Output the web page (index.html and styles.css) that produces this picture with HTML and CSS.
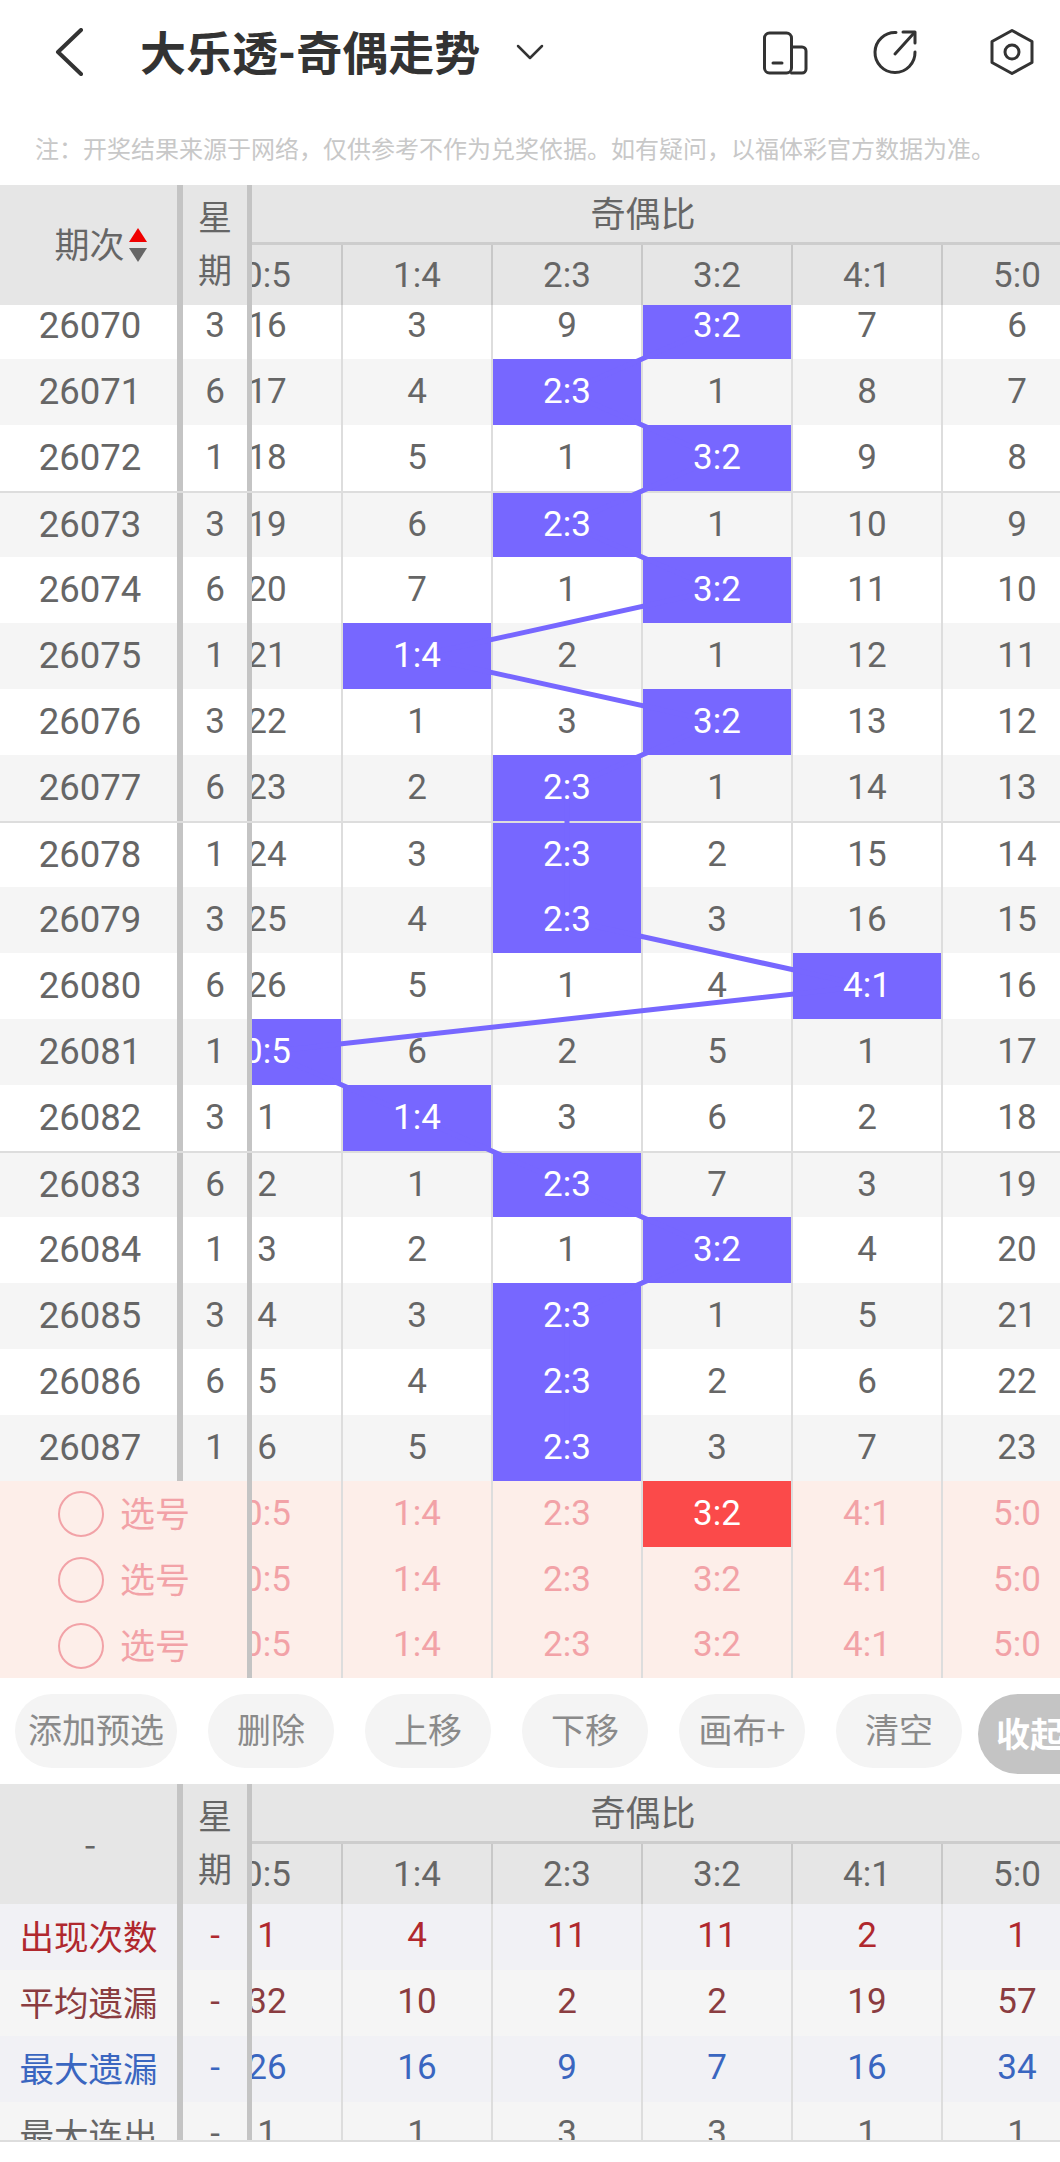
FILE: index.html

```html
<!DOCTYPE html>
<html lang="zh-CN">
<head>
    <meta charset="UTF-8">
    <title>大乐透-奇偶走势</title>
    <link rel="stylesheet" href="styles.css">
</head>
<body>
    <div class="topbar">
        <svg class="back" width="30" height="48" viewBox="0 0 30 48"><path d="M27 2 L4 24 L27 46"/></svg>
        <div class="title">大乐透-奇偶走势</div>
        <svg class="drop" width="30" height="16" viewBox="0 0 30 16"><path d="M3 2 L15 14 L27 2"/></svg>
        <div class="top-icons">
            <svg width="48" height="48" viewBox="0 0 48 48"><rect x="3.5" y="5" width="27" height="40" rx="5"/><path d="M30.5 19 H41 a4 4 0 0 1 4 4 V41 a4 4 0 0 1 -4 4 H30.5"/><path d="M12 35 H21"/></svg>
            <svg width="48" height="48" viewBox="0 0 48 48"><path d="M25 4.5 A20 20 0 1 0 44 24"/><path d="M24 26 L43 5"/><path d="M32 4 H44 V15"/></svg>
            <svg width="48" height="48" viewBox="0 0 48 48"><path d="M24 2.5 L44 13.5 V34.5 L24 45.5 L4 34.5 V13.5 Z"/><circle cx="24" cy="24" r="7"/></svg>
        </div>
    </div>
    <div class="note">注：开奖结果来源于网络，仅供参考不作为兑奖依据。如有疑问，以福体彩官方数据为准。</div>

    <div class="thead">
        <div class="qi sorted">期次<span class="sort"><i class="up"></i><i class="down"></i></span></div>
        <div class="xq"><span>星</span><span>期</span></div>
        <div class="pane">
            <div class="group">奇偶比</div>
            <div class="cells"><div>0:5</div><div>1:4</div><div>2:3</div><div>3:2</div><div>4:1</div><div>5:0</div></div>
        </div>
    </div>

    <div class="board">
        <svg class="lines" width="808" height="1176" viewBox="252 305 808 1176">
            <polyline points="717,326 567,392 717,458 567,524 717,590 417,656 717,722 567,788 567,854 567,920 867,986 267,1052 417,1118 567,1184 717,1250 567,1316 567,1382 567,1448"/>
        </svg>
        <div class="board-in">
            <div class="row"><div class="qi">26070</div><div class="xq">3</div><div class="pane"><div class="cells"><div>16</div><div>3</div><div>9</div><div class="hit"><span>3:2</span></div><div>7</div><div>6</div></div></div></div>
            <div class="row alt"><div class="qi">26071</div><div class="xq">6</div><div class="pane"><div class="cells"><div>17</div><div>4</div><div class="hit"><span>2:3</span></div><div>1</div><div>8</div><div>7</div></div></div></div>
            <div class="row"><div class="qi">26072</div><div class="xq">1</div><div class="pane"><div class="cells"><div>18</div><div>5</div><div>1</div><div class="hit"><span>3:2</span></div><div>9</div><div>8</div></div></div></div>
            <div class="row alt five"><div class="qi">26073</div><div class="xq">3</div><div class="pane"><div class="cells"><div>19</div><div>6</div><div class="hit"><span>2:3</span></div><div>1</div><div>10</div><div>9</div></div></div></div>
            <div class="row"><div class="qi">26074</div><div class="xq">6</div><div class="pane"><div class="cells"><div>20</div><div>7</div><div>1</div><div class="hit"><span>3:2</span></div><div>11</div><div>10</div></div></div></div>
            <div class="row alt"><div class="qi">26075</div><div class="xq">1</div><div class="pane"><div class="cells"><div>21</div><div class="hit"><span>1:4</span></div><div>2</div><div>1</div><div>12</div><div>11</div></div></div></div>
            <div class="row"><div class="qi">26076</div><div class="xq">3</div><div class="pane"><div class="cells"><div>22</div><div>1</div><div>3</div><div class="hit"><span>3:2</span></div><div>13</div><div>12</div></div></div></div>
            <div class="row alt"><div class="qi">26077</div><div class="xq">6</div><div class="pane"><div class="cells"><div>23</div><div>2</div><div class="hit"><span>2:3</span></div><div>1</div><div>14</div><div>13</div></div></div></div>
            <div class="row five"><div class="qi">26078</div><div class="xq">1</div><div class="pane"><div class="cells"><div>24</div><div>3</div><div class="hit"><span>2:3</span></div><div>2</div><div>15</div><div>14</div></div></div></div>
            <div class="row alt"><div class="qi">26079</div><div class="xq">3</div><div class="pane"><div class="cells"><div>25</div><div>4</div><div class="hit"><span>2:3</span></div><div>3</div><div>16</div><div>15</div></div></div></div>
            <div class="row"><div class="qi">26080</div><div class="xq">6</div><div class="pane"><div class="cells"><div>26</div><div>5</div><div>1</div><div>4</div><div class="hit"><span>4:1</span></div><div>16</div></div></div></div>
            <div class="row alt"><div class="qi">26081</div><div class="xq">1</div><div class="pane"><div class="cells"><div class="hit"><span>0:5</span></div><div>6</div><div>2</div><div>5</div><div>1</div><div>17</div></div></div></div>
            <div class="row"><div class="qi">26082</div><div class="xq">3</div><div class="pane"><div class="cells"><div>1</div><div class="hit"><span>1:4</span></div><div>3</div><div>6</div><div>2</div><div>18</div></div></div></div>
            <div class="row alt five"><div class="qi">26083</div><div class="xq">6</div><div class="pane"><div class="cells"><div>2</div><div>1</div><div class="hit"><span>2:3</span></div><div>7</div><div>3</div><div>19</div></div></div></div>
            <div class="row"><div class="qi">26084</div><div class="xq">1</div><div class="pane"><div class="cells"><div>3</div><div>2</div><div>1</div><div class="hit"><span>3:2</span></div><div>4</div><div>20</div></div></div></div>
            <div class="row alt"><div class="qi">26085</div><div class="xq">3</div><div class="pane"><div class="cells"><div>4</div><div>3</div><div class="hit"><span>2:3</span></div><div>1</div><div>5</div><div>21</div></div></div></div>
            <div class="row"><div class="qi">26086</div><div class="xq">6</div><div class="pane"><div class="cells"><div>5</div><div>4</div><div class="hit"><span>2:3</span></div><div>2</div><div>6</div><div>22</div></div></div></div>
            <div class="row alt"><div class="qi">26087</div><div class="xq">1</div><div class="pane"><div class="cells"><div>6</div><div>5</div><div class="hit"><span>2:3</span></div><div>3</div><div>7</div><div>23</div></div></div></div>
        </div>
    </div>

    <div class="picks">
        <div class="row"><div class="pick"><span class="ring"></span>选号</div><div class="pane"><div class="cells"><div>0:5</div><div>1:4</div><div>2:3</div><div class="sel">3:2</div><div>4:1</div><div>5:0</div></div></div></div>
        <div class="row"><div class="pick"><span class="ring"></span>选号</div><div class="pane"><div class="cells"><div>0:5</div><div>1:4</div><div>2:3</div><div>3:2</div><div>4:1</div><div>5:0</div></div></div></div>
        <div class="row"><div class="pick"><span class="ring"></span>选号</div><div class="pane"><div class="cells"><div>0:5</div><div>1:4</div><div>2:3</div><div>3:2</div><div>4:1</div><div>5:0</div></div></div></div>
    </div>

    <div class="toolbar">
        <div class="pill wide">添加预选</div>
        <div class="pill">删除</div>
        <div class="pill">上移</div>
        <div class="pill">下移</div>
        <div class="pill">画布+</div>
        <div class="pill">清空</div>
        <div class="pill fold">收起</div>
    </div>

    <div class="thead">
        <div class="qi">-</div>
        <div class="xq"><span>星</span><span>期</span></div>
        <div class="pane">
            <div class="group">奇偶比</div>
            <div class="cells"><div>0:5</div><div>1:4</div><div>2:3</div><div>3:2</div><div>4:1</div><div>5:0</div></div>
        </div>
    </div>
    <div class="stats">
        <div class="row s-red"><div class="qi">出现次数</div><div class="xq">-</div><div class="pane"><div class="cells"><div>1</div><div>4</div><div>11</div><div>11</div><div>2</div><div>1</div></div></div></div>
        <div class="row s-brown"><div class="qi">平均遗漏</div><div class="xq">-</div><div class="pane"><div class="cells"><div>32</div><div>10</div><div>2</div><div>2</div><div>19</div><div>57</div></div></div></div>
        <div class="row s-blue"><div class="qi">最大遗漏</div><div class="xq">-</div><div class="pane"><div class="cells"><div>26</div><div>16</div><div>9</div><div>7</div><div>16</div><div>34</div></div></div></div>
        <div class="row s-gray"><div class="qi">最大连出</div><div class="xq">-</div><div class="pane"><div class="cells"><div>1</div><div>1</div><div>3</div><div>3</div><div>1</div><div>1</div></div></div></div>
    </div>
</body>
</html>
```

FILE: styles.css

```css
* {
    box-sizing: border-box;
}
html, body {
    height: 2162px;
    overflow: hidden;
}
body {
    margin: 0;
    background: white;
    color: #666;
    font-family: Roboto, "Noto Sans CJK SC", sans-serif;
    font-size: 35px;
}

/* top bar */
.topbar {
    height: 104px;
    display: flex;
    align-items: center;
}
.topbar svg {
    fill: none;
    stroke: #333;
    stroke-linecap: round;
    stroke-linejoin: round;
}
.back {
    margin-left: 54px;
    stroke-width: 4;
}
.title {
    flex: 0 0 375px;
    margin-left: 56px;
    padding-bottom: 4px;
    font-size: 46px;
    font-weight: 700;
    color: #333;
    white-space: nowrap;
}
.drop {
    stroke-width: 2.5;
}
.top-icons {
    margin-left: auto;
    margin-right: 24px;
    display: flex;
    gap: 62px;
    stroke-width: 3;
}
.top-icons svg:last-child {
    margin-left: 7px;
}
.note {
    height: 81px;
    padding: 11px 0 0 35px;
    line-height: 70px;
    font-size: 24px;
    color: #c8c8c8;
    white-space: nowrap;
}

/* shared columns */
.qi {
    flex: 0 0 183px;
    border-right: 6px solid #c4c4c4;
    display: flex;
    align-items: center;
    justify-content: center;
    padding-left: 3px;
}
.xq {
    flex: 0 0 69px;
    border-right: 5px solid #c4c4c4;
    display: flex;
    flex-direction: column;
    align-items: center;
    justify-content: center;
}
.pane {
    flex: 1;
    overflow: hidden;
}
.cells {
    display: flex;
    height: 100%;
    margin-left: -59px;
    width: 900px;
}
.cells > div {
    flex: 0 0 150px;
    border-right: 2px solid #ddd;
    display: flex;
    align-items: center;
    justify-content: center;
}

/* header */
.thead {
    height: 120px;
    display: flex;
    background: #e6e6e6;
    font-size: 35px;
}
.thead .qi {
    padding-bottom: 5px;
    font-family: "Noto Sans CJK SC", sans-serif;
}
.thead .sorted {
    padding-left: 24px;
}
.thead .xq {
    padding-bottom: 6px;
}
.thead .xq span {
    height: 53px;
    line-height: 53px;
    font-size: 34px;
    font-family: "Noto Sans CJK SC", sans-serif;
}
.thead .group {
    height: 60px;
    margin-left: -59px;
    width: 900px;
    border-bottom: 3px solid #cdcdcd;
    text-align: center;
    line-height: 54px;
    font-family: "Noto Sans CJK SC", sans-serif;
}
.thead .cells {
    height: 60px;
}
.thead .cells > div {
    border-right-color: #c8c8c8;
}
.sort {
    display: flex;
    flex-direction: column;
    gap: 6px;
    margin-left: 4px;
    margin-bottom: -4px;
}
.sort i {
    display: block;
    width: 0;
    height: 0;
    border-left: 9px solid transparent;
    border-right: 9px solid transparent;
}
.sort .up {
    border-bottom: 14px solid #f00000;
}
.sort .down {
    border-top: 14px solid #666;
}

/* history rows */
.board {
    position: relative;
    height: 1176px;
    overflow: hidden;
}
.board-in {
    margin-top: -12px;
}
.board .qi {
    font-size: 36.5px;
}
.lines {
    position: absolute;
    left: 252px;
    top: 0;
    z-index: 1;
}
.lines polyline {
    fill: none;
    stroke: #7767ff;
    stroke-width: 5;
}
.row {
    height: 66px;
    display: flex;
}
.row .qi,
.row .xq,
.row .cells > div {
    padding-bottom: 2px;
}
.alt {
    background: #f5f5f5;
}
.five {
    border-top: 2px solid #ddd;
}
.cells > .hit {
    background: #7767ff;
    color: white;
}
.hit span {
    position: relative;
    z-index: 2;
}

/* pick rows */
.picks {
    height: 197px;
    background: #fdeee9;
    color: #f2a2a7;
}
.row .pick {
    flex: 0 0 252px;
    border-right: 5px solid #c4c4c4;
    display: flex;
    align-items: center;
    padding-left: 58px;
    padding-bottom: 5px;
    font-size: 35px;
    font-family: "Noto Sans CJK SC", sans-serif;
}
.ring {
    width: 46px;
    height: 46px;
    margin-right: 16px;
    margin-bottom: -5px;
    border: 2.5px solid #f2a2a7;
    border-radius: 50%;
}
.picks .row:last-child {
    height: 65px;
}
.cells > .sel {
    background: #fb4a4a;
    color: white;
}

/* buttons */
.toolbar {
    height: 106px;
    padding: 16px 0 0 15px;
    display: flex;
    align-items: flex-start;
    gap: 31px;
    overflow: hidden;
}
.pill {
    flex: 0 0 126px;
    height: 74px;
    border-radius: 37px;
    background: #f4f4f4;
    color: #8a8a8a;
    font-family: "Noto Sans CJK SC", sans-serif;
    font-size: 34px;
    line-height: 70px;
    text-align: center;
}
.pill.wide {
    flex-basis: 162px;
}
.pill.fold {
    flex: 0 0 140px;
    height: 80px;
    border-radius: 40px;
    margin-left: -15px;
    padding-left: 18px;
    background: #c4c4c4;
    color: white;
    line-height: 78px;
    text-align: left;
    font-weight: 700;
}

/* stats */
.stats {
    height: 238px;
    overflow: hidden;
    border-bottom: 2px solid #ddd;
}
.stats .row .qi,
.stats .row .xq,
.stats .row .cells > div {
    padding-bottom: 3px;
}
.stats .row .qi {
    font-family: "Noto Sans CJK SC", sans-serif;
    font-size: 34.5px;
    padding-left: 0;
    padding-bottom: 5px;
}
.s-red {
    background: #f1f1f5;
    color: #b0282e;
}
.s-brown {
    background: #f5f5f5;
    color: #8a3c40;
}
.s-blue {
    background: #f1f1f5;
    color: #3a66c0;
}
.s-gray {
    background: #f5f5f5;
}
```
